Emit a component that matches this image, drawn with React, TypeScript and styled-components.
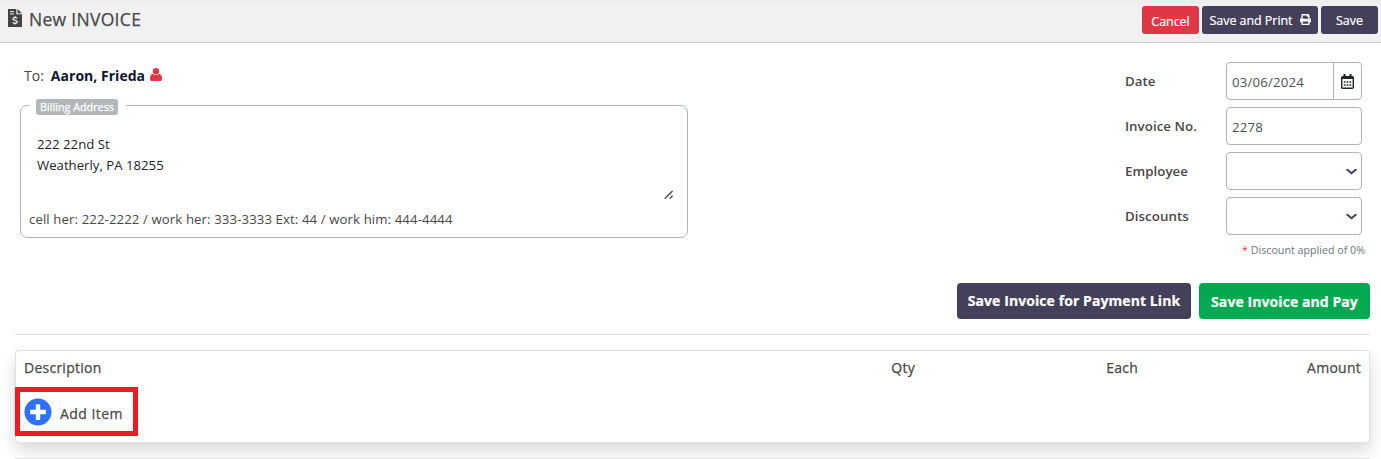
import React from 'react';
import styled, { createGlobalStyle } from 'styled-components';
import { FaPrint, FaPlusCircle } from 'react-icons/fa';

const GlobalStyle = createGlobalStyle`
  * { box-sizing: border-box; }
  html, body { margin: 0; padding: 0; }
  body {
    height: 459px;
    overflow: hidden;
    background: #fff;
    color: #484848;
    font-family: 'Open Sans', 'Noto Sans', sans-serif;
    font-size: 14px;
  }
`;

const Page = styled.div`
  width: 1381px;
  height: 459px;
  overflow: hidden;
`;

const Header = styled.header`
  display: flex;
  align-items: flex-start;
  justify-content: space-between;
  height: 43px;
  padding: 6px 3px 0 8px;
  background: linear-gradient(#ededed, #f1f1f1 6px);
  border-bottom: 1px solid #cfcfcf;
`;

const Title = styled.h1`
  display: flex;
  align-items: flex-start;
  margin: 0;
  font-size: 17.5px;
  font-weight: 500;
  line-height: 27px;
  letter-spacing: 0.3px;
  -webkit-text-stroke: 0.25px currentColor;
  svg { width: 14px; height: 18px; margin: 3px 7px 0 0; }
`;

const Actions = styled.div`
  display: flex;
  gap: 3px;
`;

const SmallButton = styled.button<{ $bg: string; $w: number; $drop?: number }>`
  display: flex;
  align-items: center;
  justify-content: center;
  gap: 7px;
  width: ${p => p.$w}px;
  height: 28px;
  padding: ${p => p.$drop ?? 0}px 0 0;
  border: 0;
  border-radius: 3px;
  background: ${p => p.$bg};
  color: #fff;
  font: 500 12.5px 'Open Sans', sans-serif;
  letter-spacing: -0.05px;
  -webkit-text-stroke: 0.2px currentColor;
  white-space: nowrap;
  svg { margin-top: -1px; stroke: none; }
`;

const Top = styled.main`
  display: flex;
  justify-content: space-between;
  height: 240px;
  padding: 19px 16px 0 20px;
`;

const Customer = styled.section`
  width: 668px;
`;

const Recipient = styled.div`
  display: flex;
  align-items: center;
  height: 26px;
  padding-left: 4px;
  font-size: 14px;
  strong { margin: 0 5px 0 7px; color: #0a1533; font-weight: 700; letter-spacing: 0.03px; }
  svg { margin-top: -2px; }
`;

const AddressBox = styled.fieldset`
  height: 139px;
  margin: 11px 0 0;
  padding: 0 13px 0 8px;
  border: 1px solid #b0b5b7;
  border-radius: 7px;
`;

const Legend = styled.legend`
  height: 13px;
  padding: 0 8px 0 7px;
  span {
    display: block;
    width: 82px;
    height: 16px;
    border-radius: 3px;
    background: #b2b8ba;
    color: #fff;
    font-size: 10.8px;
    font-weight: 500;
    -webkit-text-stroke: 0.25px currentColor;
    line-height: 16px;
    text-align: center;
    white-space: nowrap;
  }
`;

const Address = styled.div`
  display: flex;
  justify-content: space-between;
  align-items: flex-end;
  height: 89px;
  padding: 22px 0 0 8px;
  color: #212529;
  font-size: 13.2px;
  line-height: 21px;
  p { align-self: flex-start; margin: 0; }
`;

const Phones = styled.p`
  margin: 8px 0 0;
  font-size: 13.2px;
  letter-spacing: 0.105px;
  line-height: 20px;
  white-space: nowrap;
`;

const Fields = styled.section`
  display: flex;
  flex-direction: column;
  gap: 7px;
  width: 240px;
`;

const Field = styled.label`
  display: flex;
  justify-content: space-between;
  width: 237px;
  font-size: 13.3px;
  font-weight: 600;
  letter-spacing: 0.05px;
  line-height: 38px;
`;

const Control = styled.span`
  display: flex;
  align-items: stretch;
  justify-content: space-between;
  width: 136px;
  height: 38px;
  padding-left: 5px;
  border: 1px solid #b4b4b4;
  border-radius: 4px;
  color: #495057;
  font-size: 13.2px;
  font-weight: 400;
  letter-spacing: 0.2px;
  line-height: 38px;
`;

const CalendarAddon = styled.span`
  display: flex;
  align-items: center;
  justify-content: center;
  width: 28px;
  border-left: 1px solid #b4b4b4;
`;

const Caret = styled.svg`
  width: 11px;
  height: 11px;
  margin: 13px 4px 0 0;
`;

const DiscountNote = styled.p`
  margin: 0;
  color: #6c757d;
  font-size: 10.7px;
  line-height: 16px;
  text-align: right;
  white-space: nowrap;
  span { color: #e03747; }
`;

const PayActions = styled.div`
  display: flex;
  justify-content: flex-end;
  gap: 8px;
  padding-right: 11px;
`;

const BigButton = styled.button<{ $bg: string; $w: number; $drop?: number }>`
  width: ${p => p.$w}px;
  height: 36px;
  padding: ${p => p.$drop ?? 0}px 0 0;
  border: 0;
  border-radius: 4px;
  background: ${p => p.$bg};
  color: #fff;
  font: 700 14px/34px 'Open Sans', sans-serif;
  letter-spacing: 0.08px;
  -webkit-text-stroke: 0.2px currentColor;
  white-space: nowrap;
`;

const Rule = styled.hr`
  position: relative;
  height: 1px;
  margin: 15px 11px 15px 15px;
  border: 0;
  background: #e0e0e2;
`;

const Items = styled.section`
  height: 93px;
  margin: 0 11px 0 15px;
  border: 1px solid #dee0e4;
  border-radius: 4px;
  background: #fff;
  box-shadow: 0 8px 16px rgba(0, 0, 0, 0.15);
`;

const ItemsHead = styled.div`
  display: grid;
  grid-template-columns: 1fr 200px 223px 223px;
  height: 36px;
  padding: 0 8px;
  font-size: 14px;
  font-weight: 500;
  letter-spacing: 0.25px;
  -webkit-text-stroke: 0.25px currentColor;
  line-height: 34px;
  text-align: right;
  span:first-child { text-align: left; }
`;

const AddItem = styled.button`
  display: flex;
  align-items: center;
  gap: 8px;
  width: 123px;
  height: 49px;
  margin: 0 0 0 -1px;
  padding: 0 0 0 4px;
  border: 5px solid #ed1c24;
  background: #fff;
  color: #484848;
  font: 500 14px 'Open Sans', sans-serif;
  letter-spacing: 0.45px;
  -webkit-text-stroke: 0.25px currentColor;
  white-space: nowrap;
  svg { width: 28px; height: 28px; color: #2f72f8; stroke: none; }
  span { padding-top: 3px; }
`;

const InvoiceIcon = () => (
  <svg viewBox="0 0 14 18">
    <path fill="#444" d="M0 0h8.3v5.2H14V18H0z" />
    <path fill="#444" d="M9.5 0 14 4.2H9.5z" />
    <path stroke="#f1f1f1" strokeWidth="1" d="M2 2.7h3.8M2 4.9h3.8" />
    <path
      fill="none"
      stroke="#f1f1f1"
      strokeWidth="1.3"
      d="M9.2 9.3C8.6 8.7 7.8 8.6 7 8.6c-1.2 0-2 .5-2 1.4 0 2 4.3.7 4.3 2.7 0 1-.9 1.5-2.2 1.5-.9 0-1.7-.3-2.3-.8M7.1 7.300v1.500M7.1 14v1.5"
    />
  </svg>
);

const PersonIcon = () => (
  <svg width="12" height="13" viewBox="0 0 12 13" fill="#e03747">
    <circle cx="6" cy="3.2" r="3.2" />
    <path d="M3 6c-2 0-3 2-3 4.7C0 12.2.9 13 2.2 13h7.6c1.3 0 2.2-.8 2.2-2.3C12 8 11 6 9 6c-.8.7-1.8 1.1-3 1.1S3.8 6.7 3 6z" />
  </svg>
);

const CalendarIcon = () => (
  <svg width="13" height="15" viewBox="0 0 13 15">
    <rect x=".7" y="2.7" width="11.6" height="11.6" rx="1" fill="none" stroke="#212529" strokeWidth="1.4" />
    <path stroke="#212529" strokeWidth="2" d="M.7 4h11.6M3.5 0v4M9.5 0v4" />
    <path stroke="#212529" strokeWidth="1.5" strokeDasharray="1.7 1.15" d="M2.8 8h8M2.8 11h8" />
  </svg>
);

const Chevron = () => (
  <Caret viewBox="0 0 16 16" fill="none" stroke="#3f4750" strokeWidth="3" strokeLinecap="round" strokeLinejoin="round">
    <path d="m2 5.5 6 5 6-5" />
  </Caret>
);

const ResizeGrip = () => (
  <svg width="10" height="12" viewBox="0 0 10 12" stroke="#4b4b4b" strokeWidth="1.4" strokeLinecap="round">
    <path d="M1.2 9.2 8.2 2.2M6.200 9.200 8.200 7.200" />
  </svg>
);

export default function App() {
  return (
    <Page>
      <GlobalStyle />
      <Header>
        <Title><InvoiceIcon />New INVOICE</Title>
        <Actions>
          <SmallButton $bg="#e03747" $w={57} $drop={2}>Cancel</SmallButton>
          <SmallButton $bg="#45405a" $w={116}>Save and Print <FaPrint size={11} /></SmallButton>
          <SmallButton $bg="#45405a" $w={57}>Save</SmallButton>
        </Actions>
      </Header>
      <Top>
        <Customer>
          <Recipient>To: <strong>Aaron, Frieda</strong><PersonIcon /></Recipient>
          <AddressBox>
            <Legend><span>Billing Address</span></Legend>
            <Address>
              <p>222 22nd St<br />Weatherly, PA 18255</p>
              <ResizeGrip />
            </Address>
            <Phones>cell her: 222-2222 / work her: 333-3333 Ext: 44 / work him: 444-4444</Phones>
          </AddressBox>
        </Customer>
        <Fields>
          <Field>Date<Control>03/06/2024<CalendarAddon><CalendarIcon /></CalendarAddon></Control></Field>
          <Field>Invoice No.<Control>2278</Control></Field>
          <Field>Employee<Control><span /><Chevron /></Control></Field>
          <Field>Discounts<Control><span /><Chevron /></Control></Field>
          <DiscountNote><span>*</span> Discount applied of 0%</DiscountNote>
        </Fields>
      </Top>
      <PayActions>
        <BigButton $bg="#45405a" $w={234}>Save Invoice for Payment Link</BigButton>
        <BigButton $bg="#02a950" $w={171} $drop={2}>Save Invoice and Pay</BigButton>
      </PayActions>
      <Rule />
      <Items>
        <ItemsHead><span>Description</span><span>Qty</span><span>Each</span><span>Amount</span></ItemsHead>
        <AddItem><FaPlusCircle /><span>Add Item</span></AddItem>
      </Items>
      <Rule />
    </Page>
  );
}
